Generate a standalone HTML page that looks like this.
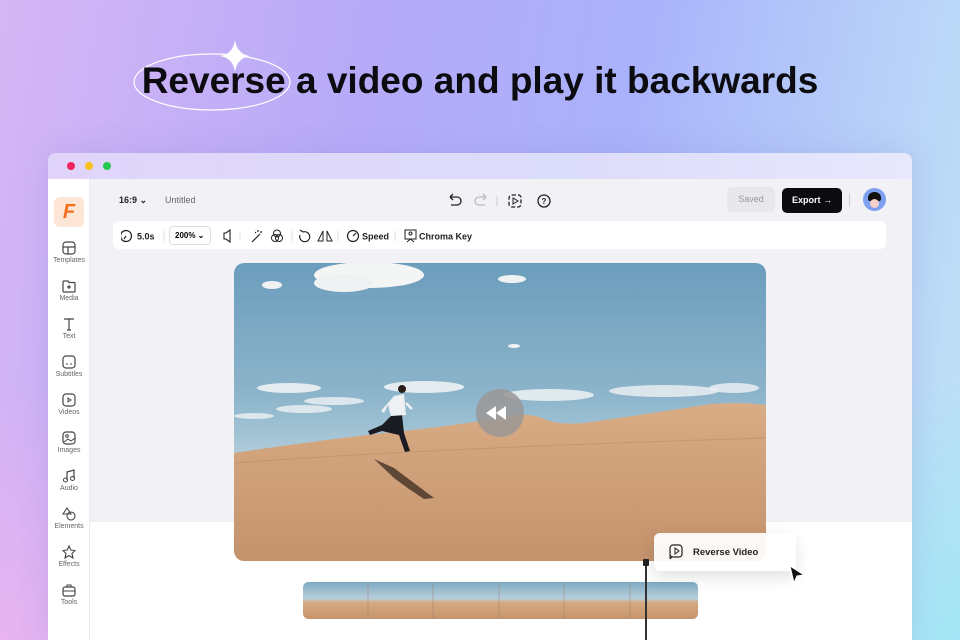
<!DOCTYPE html>
<html><head><meta charset="utf-8"><style>
*{margin:0;padding:0;box-sizing:border-box}
html,body{width:960px;height:640px;overflow:hidden}
body{font-family:"Liberation Sans",sans-serif;position:relative;
background:linear-gradient(100deg,#d6b6f5 0%,#b6aaf8 35%,#aab2fb 60%,#b8d2f8 85%,#c0e4f6 100%);}
.bgl{position:absolute;inset:0;background:radial-gradient(ellipse 420px 380px at 0% 100%,rgba(235,180,240,.9),rgba(235,180,240,0) 70%),radial-gradient(ellipse 380px 380px at 100% 100%,rgba(160,230,245,.9),rgba(160,230,245,0) 70%)}
h1{position:absolute;left:0;width:960px;top:60px;text-align:center;font-size:37px;font-weight:700;color:#0b0b10;letter-spacing:0px}
.win{position:absolute;left:48px;top:153px;width:864px;height:487px;border-radius:8px 8px 0 0;overflow:hidden;background:#f2f2f6;box-shadow:0 0 30px rgba(120,120,200,.2)}
.tb{height:26px;background:linear-gradient(90deg,#e0d4fa,#dcdcfb 60%,#e8e8fc)}
.dot{position:absolute;top:9px;width:8px;height:8px;border-radius:50%}
.side{position:absolute;left:0;top:26px;width:42px;bottom:0;background:#fff;border-right:1px solid #ececf0}
.si{position:absolute;left:0;width:42px;text-align:center;font-size:7px;color:#666}
.si svg{display:block;margin:0 auto 2px}
.abs{position:absolute}
.t{font-size:9px;color:#222}
</style></head><body>
<div class="bgl"></div>
<svg class="abs" style="left:130px;top:38px" width="170" height="80"><ellipse cx="82" cy="44" rx="78" ry="28" fill="none" stroke="#fff" stroke-width="1.2"/><path d="M105 2 Q107 16 120 18 Q107 20 105 34 Q103 20 90 18 Q103 16 105 2Z" fill="#fff"/></svg>
<h1>Reverse a video and play it backwards</h1>
<div class="win">
<div class="tb"></div>
<div class="dot" style="left:19px;background:#f0245c"></div><div class="dot" style="left:37px;background:#f9c21a"></div><div class="dot" style="left:55px;background:#27c950"></div>
<div class="side">
<div class="abs" style="left:6px;top:18px;width:30px;height:30px;border-radius:6px;background:#fde6d6;color:#f36d1e;font-weight:700;font-size:20px;text-align:center;line-height:30px;font-style:italic">F</div>
<div class="si" style="top:62px"><svg width="14" height="14"><rect x="1" y="1" width="12" height="12" rx="3" fill="none" stroke="#444" stroke-width="1.2"/><path d="M1 6H13M6 6V13" stroke="#444" stroke-width="1.2"/></svg>Templates</div>
<div class="si" style="top:100px"><svg width="14" height="14"><path d="M1 3Q1 2 2 2H6L7 3.5H12Q13 3.5 13 4.5V12Q13 13 12 13H2Q1 13 1 12Z M7 6V10M5 8H9" fill="none" stroke="#444" stroke-width="1.2"/></svg>Media</div>
<div class="si" style="top:138px"><svg width="14" height="14"><path d="M2 2H12M7 2V13M5 13H9" stroke="#444" stroke-width="1.2" fill="none"/></svg>Text</div>
<div class="si" style="top:176px"><svg width="14" height="14"><rect x="1" y="1" width="12" height="12" rx="3" fill="none" stroke="#444" stroke-width="1.2"/><path d="M4 9H6M8 9H10" stroke="#444"/></svg>Subtitles</div>
<div class="si" style="top:214px"><svg width="14" height="14"><rect x="1" y="1" width="12" height="12" rx="3" fill="none" stroke="#444" stroke-width="1.2"/><path d="M6 5V9L9 7Z" fill="none" stroke="#444"/></svg>Videos</div>
<div class="si" style="top:252px"><svg width="14" height="14"><rect x="1" y="1" width="12" height="12" rx="3" fill="none" stroke="#444" stroke-width="1.2"/><path d="M2 11L6 8L9 10L13 7" fill="none" stroke="#444"/><circle cx="5" cy="5" r="1.3" fill="none" stroke="#444"/></svg>Images</div>
<div class="si" style="top:290px"><svg width="14" height="14"><path d="M5 11V3L12 1V9" fill="none" stroke="#444" stroke-width="1.2"/><circle cx="3.5" cy="11" r="2" fill="none" stroke="#444"/><circle cx="10.5" cy="9.5" r="2" fill="none" stroke="#444"/></svg>Audio</div>
<div class="si" style="top:328px"><svg width="14" height="14"><path d="M1 7L5 1L9 7Z" fill="none" stroke="#444" stroke-width="1.1"/><circle cx="9" cy="9" r="4" fill="none" stroke="#444" stroke-width="1.1"/></svg>Elements</div>
<div class="si" style="top:366px"><svg width="14" height="14"><path d="M7 1L8.8 5L13 5.5L10 8.5L11 13L7 10.5L3 13L4 8.5L1 5.5L5.2 5Z" fill="none" stroke="#444" stroke-width="1.1"/></svg>Effects</div>
<div class="si" style="top:404px"><svg width="14" height="14"><rect x="1" y="4" width="12" height="9" rx="2" fill="none" stroke="#444" stroke-width="1.2"/><path d="M5 4V2H9V4M1 8H13" fill="none" stroke="#444"/></svg>Tools</div>
</div>
<!-- top bar -->
<div class="abs t" style="left:71px;top:42px;font-weight:700">16:9 ⌄</div>
<div class="abs t" style="left:117px;top:42px;color:#666">Untitled</div>
<svg class="abs" style="left:398px;top:40px" width="110" height="16"><path d="M4 4H11A4 4 0 0 1 11 12H5M4 4L7 1M4 4L7 7" fill="none" stroke="#222" stroke-width="1.3"/><path d="M40 4H33A4 4 0 0 0 33 12H39M40 4L37 1M40 4L37 7" fill="none" stroke="#bbb" stroke-width="1.3"/><path d="M51 3V13" stroke="#ccc"/><rect x="63" y="2" width="12" height="12" rx="3" fill="none" stroke="#222" stroke-width="1.3" stroke-dasharray="4 2"/><path d="M67 5V11L72 8Z" fill="none" stroke="#222"/><circle cx="98" cy="8" r="6" fill="none" stroke="#222" stroke-width="1.3"/><text x="98" y="11" font-size="8" font-weight="700" text-anchor="middle" fill="#222">?</text></svg>
<div class="abs" style="left:679px;top:34px;width:48px;height:25px;border-radius:5px;background:#e8e8ec;color:#999;font-size:9px;text-align:center;line-height:25px">Saved</div>
<div class="abs" style="left:734px;top:35px;width:60px;height:25px;border-radius:5px;background:#0c0c10;color:#fff;font-size:9px;font-weight:700;text-align:center;line-height:25px">Export →</div>
<div class="abs" style="left:801px;top:40px;width:1px;height:14px;background:#ccc"></div>
<div class="abs" style="left:815px;top:35px;width:23px;height:23px;border-radius:50%;background:#7f9ff0;overflow:hidden"><div class="abs" style="left:5px;top:4px;width:13px;height:9px;background:#111;border-radius:6px 6px 2px 2px"></div><div class="abs" style="left:7px;top:11px;width:9px;height:9px;background:#f7d0c8;border-radius:50%"></div></div>
<!-- toolbar -->
<div class="abs" style="left:65px;top:68px;width:773px;height:28px;background:#fff;border-radius:6px"></div>
<svg class="abs" style="left:73px;top:75px" width="400" height="16"><circle cx="5" cy="8" r="5.5" fill="none" stroke="#222" stroke-width="1.2"/><path d="M5 8L3 11" stroke="#222" stroke-width="1.2"/><text x="16" y="11.5" font-size="9" font-weight="700" fill="#222" font-family="Liberation Sans">5.0s</text><path d="M43 3V13M119 3V13M171 3V13M217 3V13M274 3V13" stroke="#ddd"/><path d="M103 5H105L109 2V14L105 11H103Z" fill="none" stroke="#222" stroke-width="1.1"/><path d="M131 14L139 6M137 2V4M141 4H139M134 4L135 5" stroke="#222" stroke-width="1.2" fill="none"/><circle cx="156" cy="5.5" r="3.5" fill="none" stroke="#222"/><circle cx="154" cy="10" r="3.5" fill="none" stroke="#222"/><circle cx="158" cy="10" r="3.5" fill="none" stroke="#222"/><path d="M182 4A5 5 0 1 1 179 7M182 4L179 2" fill="none" stroke="#222" stroke-width="1.2"/><path d="M197 13L202 3V13ZM206 3L211 13H206Z" fill="none" stroke="#222"/><circle cx="232" cy="8" r="5.5" fill="none" stroke="#222" stroke-width="1.2"/><path d="M232 8L235 5" stroke="#222" stroke-width="1.2"/><text x="241" y="11.5" font-size="9" font-weight="700" fill="#222" font-family="Liberation Sans">Speed</text><rect x="284" y="2" width="11" height="9" fill="none" stroke="#222"/><circle cx="289.5" cy="5.5" r="1.5" fill="none" stroke="#222"/><path d="M286 14L289.5 11L293 14" fill="none" stroke="#222"/><text x="298" y="11.5" font-size="9" font-weight="700" fill="#222" font-family="Liberation Sans">Chroma Key</text></svg>
<div class="abs" style="left:121px;top:73px;width:42px;height:19px;border:1px solid #ddd;border-radius:4px;font-size:8px;font-weight:700;line-height:17px;padding-left:5px">200% ⌄</div>
<!-- timeline area -->
<div class="abs" style="left:42px;top:368px;right:0;bottom:0;background:#fff;border-top:1px solid #eee"></div>
<!-- video -->
<svg class="abs" style="left:186px;top:110px;border-radius:10px" width="532" height="298" viewBox="0 0 532 298">
<defs><linearGradient id="sky" x1="0" y1="0" x2="0" y2="1"><stop offset="0" stop-color="#6c9dbd"/><stop offset=".45" stop-color="#8db5cb"/><stop offset=".7" stop-color="#b9d2df"/></linearGradient>
<linearGradient id="sand" x1="0" y1="0" x2="0" y2="1"><stop offset="0" stop-color="#d8ac84"/><stop offset="1" stop-color="#c4926c"/></linearGradient><clipPath id="c"><rect width="532" height="298" rx="10"/></clipPath></defs>
<g clip-path="url(#c)">
<rect width="532" height="298" fill="url(#sky)"/>
<ellipse cx="135" cy="12" rx="55" ry="13" fill="#f4f6f6"/><ellipse cx="110" cy="20" rx="30" ry="9" fill="#eef2f3"/><ellipse cx="278" cy="16" rx="14" ry="4" fill="#eef2f3"/><ellipse cx="38" cy="22" rx="10" ry="4" fill="#eef2f3"/>
<ellipse cx="55" cy="125" rx="32" ry="5" fill="#eef2f4" opacity=".9"/><ellipse cx="190" cy="124" rx="40" ry="6" fill="#eef2f4" opacity=".9"/><ellipse cx="315" cy="132" rx="45" ry="6" fill="#eef2f4" opacity=".85"/><ellipse cx="430" cy="128" rx="55" ry="6" fill="#eef2f4" opacity=".8"/><ellipse cx="500" cy="125" rx="25" ry="5" fill="#eef2f4" opacity=".8"/><ellipse cx="70" cy="146" rx="28" ry="4" fill="#eef2f4" opacity=".8"/><ellipse cx="100" cy="138" rx="30" ry="4" fill="#eef2f4" opacity=".8"/><ellipse cx="20" cy="153" rx="20" ry="3" fill="#eef2f4" opacity=".8"/><ellipse cx="280" cy="83" rx="6" ry="2" fill="#eef2f4"/>
<path d="M0 190Q80 178 150 170Q230 162 280 152Q300 150 315 158Q330 162 350 160Q420 150 470 142Q500 138 532 142V298H0Z" fill="url(#sand)"/>
<path d="M0 200Q200 185 532 175" stroke="#b9875f" stroke-width="1" fill="none" opacity=".5"/>
<path d="M140 196L160 205L180 220L200 235L190 236L175 226L160 215Z" fill="#3a2a20" opacity=".75"/>
<path d="M158 152L168 152L170 170L176 188L171 189L165 172L148 168L136 172L134 168L148 162Z" fill="#1a1a22"/><path d="M160 133L170 131L172 152L157 153L154 142L150 150L147 148Z" fill="#eef0f4"/><circle cx="168" cy="126" r="4" fill="#2a1e18"/><path d="M172 140L178 146" stroke="#eef0f4" stroke-width="2.5"/>
<circle cx="266" cy="150" r="24" fill="#9a9896" opacity=".85"/><path d="M252 150L262 143V157Z M262 150L272 143V157Z" fill="#fff"/>
</g></svg>
<!-- filmstrip -->
<svg class="abs" style="left:255px;top:429px;border-radius:5px" width="395" height="37" viewBox="0 0 395 37"><defs><linearGradient id="fs" x1="0" y1="0" x2="0" y2="1"><stop offset="0" stop-color="#7fa9c2"/><stop offset=".45" stop-color="#b8d0dc"/><stop offset=".55" stop-color="#d6aa82"/><stop offset="1" stop-color="#c6946c"/></linearGradient></defs><rect width="395" height="37" rx="5" fill="url(#fs)"/><path d="M65 0V37M130 0V37M196 0V37M261 0V37M327 0V37" stroke="#a08070" opacity=".5"/></svg>
<div class="abs" style="left:597px;top:408px;width:1.5px;height:100px;background:#333"></div>
<div class="abs" style="left:595px;top:406px;width:6px;height:7px;background:#222;border-radius:1px"></div>
<!-- popup -->
<div class="abs" style="left:606px;top:380px;width:142px;height:38px;background:rgba(255,255,255,.93);border-radius:6px;box-shadow:0 6px 16px rgba(0,0,0,.12)"></div>
<svg class="abs" style="left:620px;top:391px" width="16" height="16"><rect x="2" y="1" width="12" height="12" rx="3" fill="none" stroke="#222" stroke-width="1.2"/><path d="M7 4V10L11 7Z" fill="none" stroke="#222"/><path d="M2 10V15M2 15L4 13" stroke="#222" fill="none"/></svg>
<div class="abs" style="left:645px;top:394px;font-size:9.5px;font-weight:700;color:#222">Reverse Video</div>
<svg class="abs" style="left:740px;top:412px" width="18" height="20"><path d="M2 1L16 10L9 11L6 18Z" fill="#111" stroke="#fff"/></svg>
</div>
</body></html>
